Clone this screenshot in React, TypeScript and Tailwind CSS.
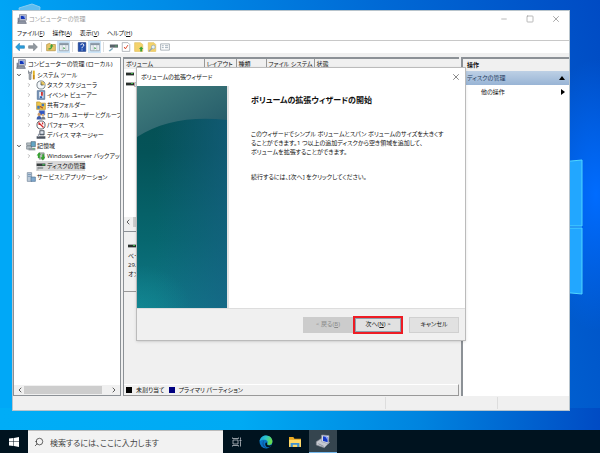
import type { ReactNode } from 'react';
import clsx from 'clsx';
import { ChevronDown, ChevronLeft, ChevronRight, Minus, Search, Square, X } from 'lucide-react';

type IconName =
  | 'computer'
  | 'tools'
  | 'clock'
  | 'event'
  | 'share'
  | 'users'
  | 'perf'
  | 'device'
  | 'storage'
  | 'backup'
  | 'disk'
  | 'services';

const icons: Record<IconName, ReactNode> = {
  computer: (
    <>
      <path d="M4 1h11v9H4z" fill="#c5c9d6" stroke="#6b7187" />
      <path d="M6 3h7v5H6z" fill="#1437b8" />
      <path d="M10 3h3v5z" fill="#7d9bf0" />
      <path d="M1 6h3v8H1z" fill="#7b8397" />
      <path d="M3 11h10l2 4H1z" fill="#9299a8" stroke="#5d6475" />
    </>
  ),
  tools: (
    <>
      <path d="M4 1v4l1 2v8h3V7l1-2V1L8 4H5z" fill="#aab0b8" stroke="#6d747d" />
      <path d="M11 1h3v7h-3z" fill="#e3b223" />
      <path d="M11 8h3v7h-3z" fill="#c98b10" />
    </>
  ),
  clock: (
    <>
      <circle cx="8" cy="8" r="6.5" fill="#f3f7fa" stroke="#7c868e" strokeWidth="1.6" />
      <path d="M8 2a6 6 0 0 1 6 6H8z" fill="#e9c65e" />
      <path d="M8 3.5V8h4" fill="none" stroke="#3d4852" strokeWidth="1.2" />
    </>
  ),
  event: (
    <>
      <path d="M2 1h12v14H2z" fill="#7794b7" stroke="#4a678d" />
      <path d="M5 3h7v10H5z" fill="#e8edf5" />
      <path d="M8 3h3v6H8z" fill="#d03535" />
      <path d="M6 10h4v3H6z" fill="#2f62b5" />
    </>
  ),
  share: (
    <>
      <path d="M1 3h5l2 2h7v10H1z" fill="#efc548" stroke="#b98f22" />
      <path d="M2 9h4v5H2zM9 6h4v4H9z" fill="#4277b8" />
      <path d="M6 10l5 3" stroke="#b0562b" strokeWidth="2" />
    </>
  ),
  users: (
    <>
      <path d="M5 1h9v7H5z" fill="#2e55c5" stroke="#7f8cab" />
      <circle cx="5" cy="7" r="2.5" fill="#c99867" />
      <path d="M1 15c0-7 8-7 8 0z" fill="#3c5aa6" />
      <circle cx="11" cy="8" r="2" fill="#d9af7d" />
      <path d="M8 15c0-6 7-6 7 0z" fill="#757b84" />
    </>
  ),
  perf: (
    <>
      <circle cx="8" cy="8" r="6.5" fill="#fff" stroke="#555b62" strokeWidth="1.5" />
      <path d="M4 4l8 8M5 8V4M10 4l1 3" stroke="#d12a2a" strokeWidth="2" />
    </>
  ),
  device: (
    <>
      <path d="M6 1h7v7H6z" fill="#697385" stroke="#39404c" />
      <path d="M1 10h14v4H1z" fill="#4b525e" />
      <path d="M7 2h5v4H7z" fill="#dfe4ec" />
      <path d="M3 6h2v5H3z" fill="#9ca4b0" />
    </>
  ),
  storage: (
    <>
      <path d="M1 3h8v4H1zM1 8h8v5H1z" fill="#bac3c9" stroke="#6b777f" />
      <path d="M8 1h7v8H8z" fill="#63a6c4" stroke="#4b6474" />
      <path d="M4 11h11v4H4z" fill="#8e999f" />
      <path d="M11 12h3v1h-3z" fill="#4fd04a" />
    </>
  ),
  backup: (
    <>
      <path d="M5 3h8v10H5z" fill="#b3bab5" stroke="#68736b" />
      <path d="M1 7l4-5 3 4H6v5H3V7zM15 9l-4 6-4-5h3V5h3v4z" fill="#35a12f" />
    </>
  ),
  disk: (
    <>
      <path d="M1 4h14v4H1z" fill="#363c3d" />
      <path d="M10 5h4v2h-4z" fill="#42bb55" />
      <path d="M3 10h8v2H3zM3 10v5" fill="#8c9293" stroke="#8c9293" />
    </>
  ),
  services: (
    <>
      <path d="M2 1h7v14H2z" fill="#bdcbd9" stroke="#667c92" />
      <path d="M3 4h5M3 7h5" stroke="#5980a8" />
      <path d="M8 8h7v7H8z" fill="#7fa9ce" stroke="#4e7192" />
    </>
  ),
};

const Icon = ({ name, className = 'size-2.5' }: { name: IconName; className?: string }) => (
  <svg viewBox="0 0 16 16" className={clsx('shrink-0', className)} aria-hidden="true">
    {icons[name]}
  </svg>
);

interface TreeNode {
  label: string;
  icon: IconName;
  open?: boolean;
  leaf?: boolean;
  selected?: boolean;
  children?: TreeNode[];
}

const tree: TreeNode[] = [
  {
    label: 'システム ツール',
    icon: 'tools',
    open: true,
    children: [
      { label: 'タスク スケジューラ', icon: 'clock' },
      { label: 'イベント ビューアー', icon: 'event' },
      { label: '共有フォルダー', icon: 'share' },
      { label: 'ローカル ユーザーとグループ', icon: 'users' },
      { label: 'パフォーマンス', icon: 'perf' },
      { label: 'デバイス マネージャー', icon: 'device', leaf: true },
    ],
  },
  {
    label: '記憶域',
    icon: 'storage',
    open: true,
    children: [
      { label: 'Windows Server バックアップ', icon: 'backup' },
      { label: 'ディスクの管理', icon: 'disk', leaf: true, selected: true },
    ],
  },
  { label: 'サービスとアプリケーション', icon: 'services' },
];

const TreeItem = ({ node }: { node: TreeNode }) => (
  <li>
    <div className="flex h-2.5 items-center">
      <span className="flex w-2.5 shrink-0 text-[#777]">
        {!node.leaf && (node.open ? <ChevronDown className="size-1.5 text-black" strokeWidth={3} /> : <ChevronRight className="size-1.5" />)}
      </span>
      <button
        type="button"
        className={clsx('flex h-2.5 items-center gap-px whitespace-nowrap', node.selected && 'bg-[#d9d9d9]')}>
        <Icon name={node.icon} />
        {node.label}
      </button>
    </div>
    {node.children && (
      <ul className="pl-2.5">
        {node.children.map((child) => (
          <TreeItem key={child.label} node={child} />
        ))}
      </ul>
    )}
  </li>
);

const menus = [
  { label: 'ファイル', hotkey: 'F' },
  { label: '操作', hotkey: 'A' },
  { label: '表示', hotkey: 'V' },
  { label: 'ヘルプ', hotkey: 'H' },
];

const WindowGlyph = () => (
  <>
    <path d="M1 2h14v12H1z" fill="#f4f6f8" stroke="#7b8894" />
    <path d="M1 2h14v3H1z" fill="#8795a3" />
    <path d="M5 5v9M11 5v9" stroke="#9aabb9" />
    <path d="M7 8l3 2-3 2z" fill="#3b9b4b" />
  </>
);

const tools = [
  {
    name: '戻る',
    art: <path d="M1 8l6-6v4h8v4H7v4z" fill="#2ca1dd" stroke="#1978b4" />,
  },
  {
    name: '進む',
    art: <path d="M15 8L9 2v4H1v4h8v4z" fill="#9299a0" stroke="#71787f" />,
    divider: true,
  },
  {
    name: '上へ',
    art: (
      <>
        <path d="M1 4l5-2 2 2h7v10H1z" fill="#e8c669" stroke="#ac8937" />
        <path d="M4 12c4 0 6-2 6-5h2L9 3 6 7h2c0 2-2 3-4 3z" fill="#3da13b" />
      </>
    ),
  },
  { name: 'ツリーの表示', art: <WindowGlyph />, active: true, divider: true },
  {
    name: 'ヘルプ',
    art: (
      <>
        <path d="M2 1h12v14H2z" fill="#234fae" stroke="#173479" />
        <path d="M6 5c0-3 5-3 5 0 0 2-3 2-3 5M8 12v1.500" stroke="#fff" strokeWidth="1.500" fill="none" />
      </>
    ),
  },
  { name: '操作ウィンドウ', art: <WindowGlyph />, active: true, divider: true },
  {
    name: '接続',
    art: (
      <>
        <path d="M3 4h13v5H3z" fill="#59636a" />
        <path d="M11 6h4v1h-4z" fill="#58cc66" />
        <path d="M1 14l6-5 1 2-5 4z" fill="#7daabd" />
      </>
    ),
  },
  {
    name: '確認',
    art: (
      <>
        <path d="M2 1h9l3 3v11H2z" fill="#fff" stroke="#8c9298" />
        <path d="M5 8l2 3 4-6" stroke="#dc4324" strokeWidth="1.500" fill="none" />
      </>
    ),
  },
  {
    name: '更新',
    art: (
      <>
        <path d="M1 1h9l4 3v11H1z" fill="#f4d26b" stroke="#e0bd58" />
        <path d="M10 15v-4H8l3.500-4 3.500 4h-2v4z" fill="#3aa338" />
      </>
    ),
  },
  {
    name: '検索',
    art: (
      <>
        <path d="M2 1h9l3 3v11H2z" fill="#f4d26b" stroke="#e0bd58" />
        <circle cx="10" cy="8" r="3" fill="#e3f1f8" stroke="#8ea3b0" />
        <path d="M8 10l-5 5" stroke="#8ea3b0" strokeWidth="2" />
      </>
    ),
  },
  {
    name: 'プロパティ',
    art: (
      <>
        <path d="M1 3h14v10H1z" fill="#fff" stroke="#7b8894" />
        <path d="M3 6h3M3 9h3M8 6h5M8 9h5" stroke="#9dabb7" strokeWidth="1.500" />
      </>
    ),
  },
];

const DiskGlyph = () => (
  <svg viewBox="0 0 8 4" className="h-1 w-2 shrink-0" aria-hidden="true">
    <path d="M0 0h8v4H0z" fill="#a7abab" />
    <path d="M0 1h8v2H0z" fill="#2a302c" />
    <path d="M5 1h2v1H5z" fill="#40bd4b" />
  </svg>
);

const Wallpaper = () => (
  <svg
    viewBox="0 0 600 453"
    preserveAspectRatio="none"
    className="pointer-events-none absolute inset-0 h-full w-full"
    aria-hidden="true">
    <defs>
      <linearGradient id="sky" x1="0" y1="0.200" x2="1" y2="0">
        <stop offset="0" stopColor="#00a8f7" />
        <stop offset="0.300" stopColor="#008ce7" />
        <stop offset="0.650" stopColor="#0069d5" />
        <stop offset="1" stopColor="#004bc4" />
      </linearGradient>
      <linearGradient id="floor" x1="0" y1="0" x2="1" y2="0">
        <stop offset="0" stopColor="#00adf7" />
        <stop offset="0.400" stopColor="#00aaf3" />
        <stop offset="0.700" stopColor="#0084df" />
        <stop offset="1" stopColor="#004bc4" />
      </linearGradient>
      <radialGradient id="glow" cx="0.980" cy="0.430" r="0.300">
        <stop offset="0" stopColor="#006cff" />
        <stop offset="1" stopColor="#006cff" stopOpacity="0" />
      </radialGradient>
    </defs>
    <path d="M0 0h600v453H0z" fill="url(#sky)" />
    <path d="M0 408h600v45H0z" fill="url(#floor)" />
    <path d="M400 0h200v453H400z" fill="url(#glow)" />
    <path d="M560 162l22-2v66h-22zM560 228h22v66l-22-2z" fill="#22a7ff" stroke="#4fd6ff" />
    <path d="M19 8l13-4 8 3-2 20H22z" fill="#5fbdf0" stroke="#86cdf0" />
  </svg>
);

const TreePane = () => (
  <nav className="flex w-27 shrink-0 flex-col overflow-hidden border border-[#8c9196] bg-white" aria-label="コンソール ツリー">
    <div className="flex-1 pt-px">
      <div className="flex h-2.5 items-center gap-0.5 pl-0.5 whitespace-nowrap">
        <Icon name="computer" />
        コンピューターの管理 (ローカル)
      </div>
      <ul className="flex flex-col gap-px pt-px pl-0.5">
        {tree.map((node) => (
          <TreeItem key={node.label} node={node} />
        ))}
      </ul>
    </div>
    <div className="flex h-2.5 items-center justify-between bg-[#f0f0f0] px-0.5">
      <ChevronLeft className="size-2" />
      <div className="mr-2 h-2 flex-1 bg-[#cdcdcd]" />
      <ChevronRight className="size-2" />
    </div>
  </nav>
);

const VolumePane = () => (
  <main className="flex min-w-0 flex-1 flex-col border-t-2 border-l border-[#8c9196] bg-[#f0f0f0]">
    <section className="flex h-42 flex-col bg-white">
      <table className="w-full table-fixed text-left">
        <thead>
          <tr className="h-2.5 bg-[#f0f0f0]">
            <th className="w-20 border-r border-[#999] p-0 pl-0.5 font-normal">ボリューム</th>
            <th className="w-8 border-r border-[#999] p-0 pl-0.5 font-normal whitespace-nowrap">レイアウト</th>
            <th className="w-7.5 border-r border-[#999] p-0 pl-0.5 font-normal">種類</th>
            <th className="w-12 border-r border-[#999] p-0 pl-0.5 font-normal whitespace-nowrap">ファイル システム</th>
            <th className="p-0 pl-0.5 font-normal">状態</th>
          </tr>
        </thead>
        <tbody>
          {['', '(C:)'].map((volume) => (
            <tr key={volume} className="h-2.5">
              <td colSpan={5} className="p-0 pl-0.5">
                <span className="flex items-center">
                  <DiskGlyph />
                  {volume}
                </span>
              </td>
            </tr>
          ))}
        </tbody>
      </table>
      <div className="mt-auto flex h-2.5 items-center gap-px bg-[#f0f0f0]">
        <ChevronLeft className="size-2" />
        <div className="h-2.5 w-60 bg-[#cdcdcd]" />
      </div>
    </section>
    <section className="mt-1 flex-1 border-t border-[#8c9196]">
      <div className="flex h-15 flex-col justify-center border-b border-[#999] pl-1">
        <DiskGlyph />
        <p className="mt-1">ベーシック</p>
        <p>29.46 GB</p>
        <p>オンライン</p>
      </div>
    </section>
    <div className="flex h-3 items-center gap-1 border-t border-r border-b border-t-white border-r-[#999] border-b-[#999] pl-0.5">
      <span className="size-1.5 bg-black" />
      未割り当て
      <span className="size-1.5 bg-[#000080]" />
      プライマリ パーティション
    </div>
  </main>
);

const ActionPane = () => (
  <aside className="w-27 shrink-0 border-t-2 border-l-2 border-[#8c9196] bg-white">
    <h2 className="flex h-3 items-center bg-[#f0f0f0] pl-1 font-bold">操作</h2>
    <button
      type="button"
      className="flex h-3.5 w-full items-center justify-between bg-linear-to-b from-[#bdd0e5] to-[#98b4d5] pr-1 pl-1 text-[#1e395b]">
      ディスクの管理
      <svg viewBox="0 0 6 4" className="h-1 w-1.5" aria-hidden="true">
        <path d="M0 4l3-4 3 4z" fill="#000" />
      </svg>
    </button>
    <button type="button" className="flex h-3.5 w-full items-center justify-between pr-1 pl-4.5">
      他の操作
      <svg viewBox="0 0 4 6" className="h-1.5 w-1" aria-hidden="true">
        <path d="M0 0l4 3-4 3z" fill="#000" />
      </svg>
    </button>
  </aside>
);

const ManagementWindow = () => (
  <div className="relative mt-2.5 mr-7.5 mb-[19px] ml-3 flex flex-1 flex-col border border-[#b8c4cc] bg-[#f0f0f0]">
    <header className="flex h-4 items-center bg-white pl-1 text-[#999]">
      <Icon name="computer" />
      <h1 className="flex-1 pl-0.5">コンピューターの管理</h1>
      <button type="button" aria-label="最小化" className="flex w-6.5 justify-center">
        <Minus className="size-2" />
      </button>
      <button type="button" aria-label="最大化" className="flex w-6.5 justify-center">
        <Square className="size-2" />
      </button>
      <button type="button" aria-label="閉じる" className="flex w-6.5 justify-center">
        <X className="size-2.5" />
      </button>
    </header>
    <div className="flex h-3.5 items-center gap-2 border-b border-[#c8c8c8] bg-white pl-1">
      {menus.map(({ label, hotkey }) => (
        <button key={label} type="button">
          {label}(<u>{hotkey}</u>)
        </button>
      ))}
    </div>
    <div className="flex h-3 items-center bg-white">
      {tools.map(({ name, art, active, divider }) => (
        <div key={name} className="flex items-center">
          <button
            type="button"
            aria-label={name}
            className={clsx('flex h-3 w-[13px] items-center justify-center', active && 'bg-[#cce4f7]')}>
            <svg viewBox="0 0 16 16" className="size-2.5" aria-hidden="true">
              {art}
            </svg>
          </button>
          {divider && <span className="mx-0.5 h-2.5 border-l border-[#ddd]" />}
        </div>
      ))}
    </div>
    <div className="flex flex-1 gap-0.5 pt-1">
      <TreePane />
      <VolumePane />
      <ActionPane />
    </div>
    <footer className="flex h-3.5">
      <span className="flex-1" />
      <span className="my-px w-28 border-l border-[#ddd]" />
      <span className="my-px w-18 border-l border-[#ddd]" />
    </footer>
    <WizardDialog />
  </div>
);

const WizardDialog = () => (
  <div
    role="dialog"
    aria-labelledby="wizard-title"
    className="absolute top-14 left-[123px] flex w-[330px] flex-col border border-[#bbb] bg-white shadow-sm">
    <header className="flex h-4.5 items-center justify-between pr-1 pl-1">
      <h2 id="wizard-title">ボリュームの拡張ウィザード</h2>
      <button type="button" aria-label="閉じる">
        <X className="size-2.5 text-[#444]" strokeWidth={1.5} />
      </button>
    </header>
    <div className="flex">
      <svg viewBox="0 0 90 222" className="h-[222px] w-[90px] shrink-0" aria-hidden="true">
        <defs>
          <linearGradient id="teal" x1="0" y1="0" x2="0" y2="1">
            <stop offset="0" stopColor="#064e52" />
            <stop offset="0.300" stopColor="#045358" />
            <stop offset="0.700" stopColor="#07676f" />
            <stop offset="1" stopColor="#107888" />
          </linearGradient>
          <linearGradient id="haze" x1="0" y1="0" x2="1" y2="1">
            <stop offset="0" stopColor="#437f7e" />
            <stop offset="1" stopColor="#215767" />
          </linearGradient>
          <linearGradient id="blue" x1="0" y1="0" x2="1" y2="0">
            <stop offset="0.200" stopColor="#185f85" stopOpacity="0" />
            <stop offset="1" stopColor="#185f85" stopOpacity="0.600" />
          </linearGradient>
          <radialGradient id="corner" cx="0" cy="1" r="0.600">
            <stop offset="0" stopColor="#13949b" stopOpacity="0.500" />
            <stop offset="1" stopColor="#13949b" stopOpacity="0" />
          </radialGradient>
        </defs>
        <path d="M0 0h90v222H0z" fill="url(#teal)" />
        <path d="M0 0h90v222H0z" fill="url(#blue)" />
        <path d="M0 0h90v34C56 30 24 35 0 51z" fill="url(#haze)" />
        <path d="M0 150h90v72H0z" fill="url(#corner)" />
      </svg>
      <div className="flex-1 border-l-2 border-[#e3e3e3] pt-1.5 pl-5.5">
        <h3 className="mb-5.5 text-[8px] leading-4 font-bold">ボリュームの拡張ウィザードの開始</h3>
        <p>
          このウィザードでシンプル ボリュームとスパン ボリュームのサイズを大きくす
          <br />
          ることができます。1 つ以上の追加ディスクから空き領域を追加して、
          <br />
          ボリュームを拡張することができます。
        </p>
        <p className="mt-4">続行するには、[次へ] をクリックしてください。</p>
      </div>
    </div>
    <footer className="flex h-8 items-center justify-end border-t border-[#ddd] bg-[#f0f0f0] pr-1.5">
      <button type="button" disabled className="h-4 w-12.5 bg-[#ccc] text-[#888]">
        {'< 戻る('}
        <u>B</u>)
      </button>
      <button type="button" className="h-4.5 w-12.5 border-2 border-[#ed1c24] bg-[#e1e1e1] inset-ring inset-ring-[#8da0ad]">
        次へ(<u>N</u>){' >'}
      </button>
      <button type="button" className="ml-1.5 h-4 w-12.5 border border-[#d0d0d0] bg-[#e1e1e1]">
        キャンセル
      </button>
    </footer>
  </div>
);

const Taskbar = () => (
  <footer className="relative flex h-[23px] items-stretch bg-[#00131f]">
    <button type="button" aria-label="スタート" className="flex w-7 items-center justify-center">
      <svg viewBox="0 0 20 20" className="size-2.5" aria-hidden="true">
        <path d="M0 3l9-1v7H0zM10 2l10-2v9H10zM0 10h9v8l-9-1zM10 10h10v10l-10-2z" fill="#fff" />
      </svg>
    </button>
    <label className="flex w-[195px] items-center gap-1.5 border-t border-[#bbb] bg-[#f2f2f2] pl-1.5">
      <Search className="size-2.5 -scale-x-100" strokeWidth={1.5} />
      <input
        type="search"
        aria-label="検索"
        placeholder="検索するには、ここに入力します"
        className="min-w-0 flex-1 bg-transparent text-[8px] outline-none placeholder:text-[#444]"
      />
    </label>
    <button type="button" aria-label="タスク ビュー" className="flex w-7 items-center justify-center">
      <svg viewBox="0 0 20 20" className="size-2.5" fill="none" stroke="#c5cbd0" strokeWidth="1.500" aria-hidden="true">
        <path d="M2 6h10v8H2zM1 1v2h12V1M1 19v-2h12v2M17 1v4M17 9v10M16 6h2v2h-2z" />
      </svg>
    </button>
    <button type="button" aria-label="Microsoft Edge" className="flex w-7.5 items-center justify-center">
      <svg viewBox="0 0 24 24" className="size-3.5" aria-hidden="true">
        <defs>
          <linearGradient id="edge-top" x1="0" y1="0" x2="1" y2="0.300">
            <stop offset="0" stopColor="#169bd8" />
            <stop offset="0.500" stopColor="#2cc4ce" />
            <stop offset="1" stopColor="#67dc50" />
          </linearGradient>
        </defs>
        <circle cx="12" cy="12" r="11" fill="#0875c7" />
        <path d="M1 11C2 4 7 1 12 1c7 0 11 5 11 10 0 4-3 6-6 6-2 0-4-1-3-2 3-4-1-7-5-7-4 0-7 1-8 3z" fill="url(#edge-top)" />
        <path d="M9 9c-3 2-4 6-2 10 2 3 5 4 8 4-7-3-9-9-6-14z" fill="#114c92" />
        <path d="M14 15c-1 2 2 4 8 2-2 3-4 4-6 4-4 0-6-4-5-7 1-2 3-1 3 1z" fill="#00131f" />
      </svg>
    </button>
    <button type="button" aria-label="エクスプローラー" className="flex w-7 items-center justify-center">
      <svg viewBox="0 0 24 22" className="h-3 w-3.5" aria-hidden="true">
        <path d="M1 2h8l2 3h12v15H1z" fill="#eaa921" />
        <path d="M1 7h22v13H1z" fill="#ffd968" />
        <path d="M4 20v-7h16v7h-4v-4H8v4z" fill="#3f92d1" />
      </svg>
    </button>
    <button
      type="button"
      aria-label="コンピューターの管理"
      className="flex w-7 items-center justify-center border-b border-[#76b9ed] bg-[#35454f]">
      <svg viewBox="0 0 24 24" className="size-4" aria-hidden="true">
        <path d="M2 13l8-5 12 6-8 8L2 18z" fill="#c6c9d0" stroke="#858b95" />
        <path d="M10 3l11 1-1 12-10-3z" fill="#dde0e9" stroke="#8e95a5" />
        <path d="M12 5l7 1v8l-7-2z" fill="#1438c5" />
        <path d="M15 5l4 1v5z" fill="#8ba5ff" />
        <path d="M5 16l8 4" stroke="#747b86" />
      </svg>
    </button>
  </footer>
);

export default function App() {
  return (
    <div
      lang="ja"
      className="relative flex min-h-screen flex-col bg-[#008ce7] font-['Open_Sans','Noto_Sans_CJK_JP',sans-serif] text-[6px] leading-[9px] text-[#111] [font-feature-settings:'palt']">
      <Wallpaper />
      <ManagementWindow />
      <Taskbar />
    </div>
  );
}
